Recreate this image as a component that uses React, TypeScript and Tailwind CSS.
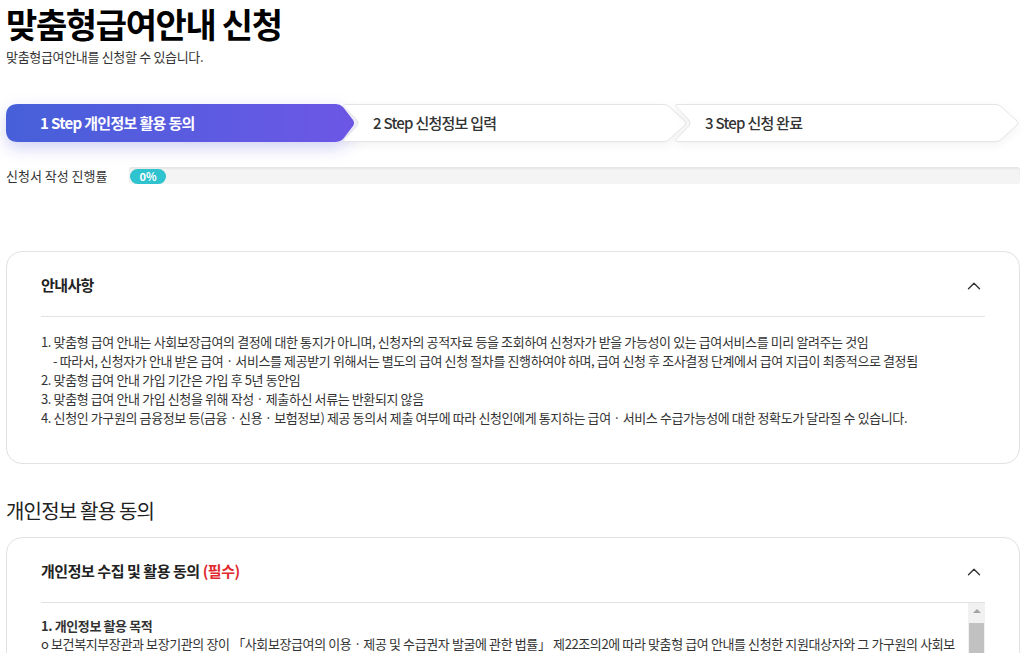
import { ChevronUp } from 'lucide-react';

const font = { fontFamily: '"Noto Sans CJK KR", "Noto Sans", sans-serif' };

const notices = [
  { text: '1. 맞춤형 급여 안내는 사회보장급여의 결정에 대한 통지가 아니며, 신청자의 공적자료 등을 조회하여 신청자가 받을 가능성이 있는 급여서비스를 미리 알려주는 것임' },
  { text: '- 따라서, 신청자가 안내 받은 급여 · 서비스를 제공받기 위해서는 별도의 급여 신청 절차를 진행하여야 하며, 급여 신청 후 조사결정 단계에서 급여 지급이 최종적으로 결정됨', sub: true },
  { text: '2. 맞춤형 급여 안내 가입 기간은 가입 후 5년 동안임' },
  { text: '3. 맞춤형 급여 안내 가입 신청을 위해 작성 · 제출하신 서류는 반환되지 않음' },
  { text: '4. 신청인 가구원의 금융정보 등(금융 · 신용 · 보험정보) 제공 동의서 제출 여부에 따라 신청인에게 통지하는 급여 · 서비스 수급가능성에 대한 정확도가 달라질 수 있습니다.' },
];

function ActiveStep({ label }: { label: string }) {
  return (
    <div className="relative h-[38px] w-[350px] shrink-0">
      <svg className="absolute inset-0 drop-shadow-[0_6px_8px_rgba(90,90,220,0.28)]" width="350" height="38" viewBox="0 0 350 38">
        <defs>
          <linearGradient id="stepGrad" x1="0" y1="0" x2="1" y2="0">
            <stop offset="0" stopColor="#4660d9" />
            <stop offset="1" stopColor="#6d57e6" />
          </linearGradient>
        </defs>
        <path d="M12 0 H330 Q334 0 337 3 L347 16 Q349 19 347 22 L337 35 Q334 38 330 38 H12 Q0 38 0 26 V12 Q0 0 12 0 Z" fill="url(#stepGrad)" />
      </svg>
      <span className="relative flex h-full items-center pl-[34px] text-[15px] font-bold tracking-[-0.045em] text-white">
        {label}
      </span>
    </div>
  );
}

function Step({ label, className }: { label: string; className?: string }) {
  return (
    <div className={'relative h-[38px] w-[352px] shrink-0 ' + (className ?? '')}>
      <svg className="absolute inset-0 drop-shadow-[0_3px_4px_rgba(0,0,0,0.05)]" width="352" height="38" viewBox="0 0 352 38">
        <path d="M8 0.5 H326 Q329 0.5 331 2.5 L347 17 Q349 19 347 21 L331 35.5 Q329 37.5 326 37.5 H8 Q4 37.5 6 35.5 L19 22 Q21 19 19 16 L6 2.5 Q4 0.5 8 0.5 Z" fill="white" stroke="#e4e4e4" />
      </svg>
      <span className="relative flex h-full items-center pl-[35px] text-[15px] font-medium tracking-[-0.05em] text-[#333]">
        {label}
      </span>
    </div>
  );
}

export default function App() {
  return (
    <div style={font} className="min-h-screen w-[1031px] overflow-hidden bg-white text-[#222]">
      <div className="px-[6px] pr-[11px]">
        <h1 className="pt-[3px] text-[34px] font-bold leading-[42px] tracking-[-0.04em] text-black">맞춤형급여안내 신청</h1>
        <p className="mt-[3px] text-[13px] leading-[18px] tracking-[-0.025em] text-[#333]">맞춤형급여안내를 신청할 수 있습니다.</p>

        <div className="mt-[38px] flex">
          <ActiveStep label="1 Step 개인정보 활용 동의" />
          <Step label="2 Step 신청정보 입력" className="-ml-[18px]" />
          <Step label="3 Step 신청 완료" className="-ml-[20px]" />
        </div>

        <div className="mt-[24px] flex items-center">
          <span className="w-[123px] text-[13px] text-[#333]">신청서 작성 진행률</span>
          <div className="flex h-[17px] flex-1 items-center rounded-[3px] border-t border-[#e6e6e6] bg-[#f4f4f4] shadow-[inset_0_1px_2px_rgba(0,0,0,0.06)]">
            <span className="ml-[1px] flex h-[15px] w-[36px] items-center justify-center rounded-full bg-[#2fc2cf] text-[11px] font-bold text-white">0%</span>
          </div>
        </div>

        <section className="mt-[65px] rounded-[16px] border border-[#e2e2e2] px-[34px] pb-[36px]">
          <div className="flex h-[65px] items-center justify-between border-b border-[#e2e2e2] pt-[4px]">
            <h2 className="text-[15px] font-bold tracking-[-0.04em] text-[#222]">안내사항</h2>
            <ChevronUp size={22} strokeWidth={1.5} className="text-[#333]" />
          </div>
          <ul className="pt-[15px] text-[13px] leading-[19px] tracking-[-0.03em] text-[#333]">
            {notices.map((n) => (
              <li key={n.text} className={'whitespace-nowrap ' + (n.sub ? 'pl-[12px]' : '')}>{n.text}</li>
            ))}
          </ul>
        </section>

        <h2 className="mt-[33px] text-[20px] leading-[28px] tracking-[-0.04em] text-[#222]">개인정보 활용 동의</h2>

        <section className="mt-[12px] rounded-[16px] border border-[#e2e2e2] px-[34px]">
          <div className="flex h-[65px] items-center justify-between border-b border-[#e2e2e2] pt-[4px]">
            <h3 className="text-[15px] font-bold tracking-[-0.03em] text-[#222]">
              개인정보 수집 및 활용 동의 <span className="text-[#e0282e]">(필수)</span>
            </h3>
            <ChevronUp size={22} strokeWidth={1.5} className="text-[#333]" />
          </div>
          <div className="flex h-[200px]">
            <div className="flex-1 overflow-hidden pt-[14px] text-[13px] leading-[18px] tracking-[-0.03em] text-[#333]">
              <p className="font-bold">1. 개인정보 활용 목적</p>
              <p className="whitespace-nowrap">o 보건복지부장관과 보장기관의 장이 「사회보장급여의 이용 · 제공 및 수급권자 발굴에 관한 법률」 제22조의2에 따라 맞춤형 급여 안내를 신청한 지원대상자와 그 가구원의 사회보</p>
            </div>
            <div className="flex w-[17px] flex-col bg-[#f1f1f1]">
              <div className="flex h-[17px] items-center justify-center">
                <span className="h-0 w-0 border-x-[4px] border-b-[4px] border-x-transparent border-b-[#a3a3a3]" />
              </div>
              <div className="mx-[1px] mt-[3px] h-[120px] bg-[#c1c1c1]" />
            </div>
          </div>
        </section>
      </div>
    </div>
  );
}
